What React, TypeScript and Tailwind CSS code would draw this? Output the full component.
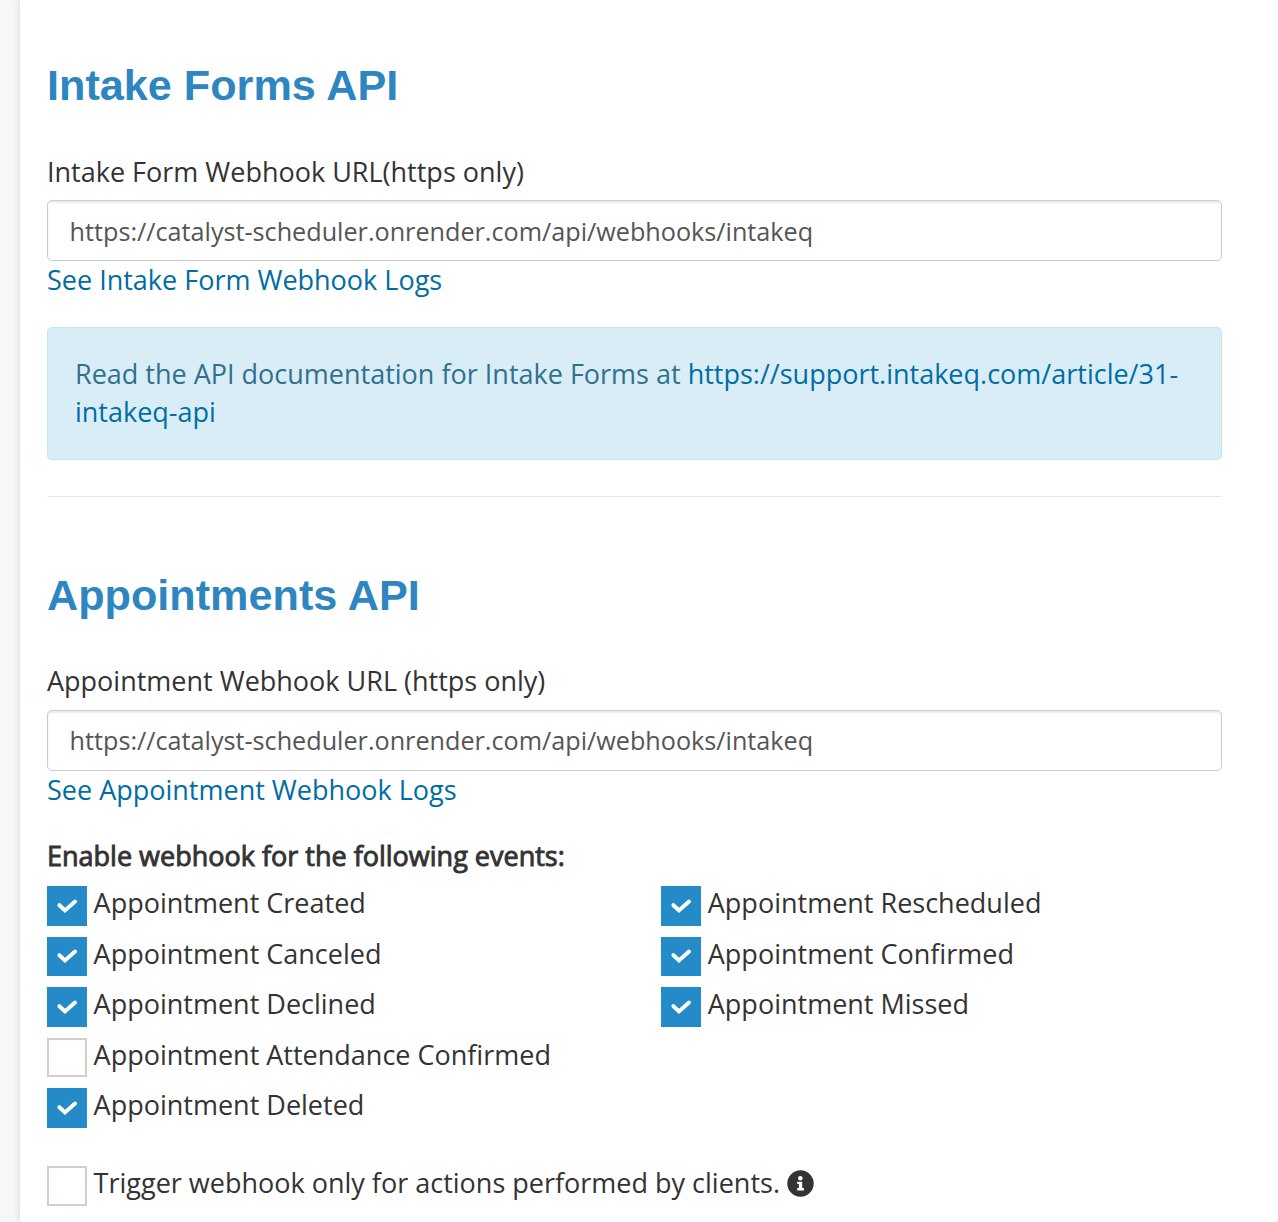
import type { ReactNode } from "react";

function Heading({ children }: { children: ReactNode }) {
  return (
    <h2 className="font-['Liberation_Sans',Arial,sans-serif] text-[43.2px] leading-[47.5px] font-bold text-[#2e86c1]">
      {children}
    </h2>
  );
}

function WebhookField({ id, label, link }: { id: string; label: string; link: string }) {
  return (
    <div>
      <label htmlFor={id} className="block">
        {label}
      </label>
      <input
        id={id}
        type="text"
        defaultValue="https://catalyst-scheduler.onrender.com/api/webhooks/intakeq"
        className="block h-[61px] w-full rounded-[5px] border border-[#ccc] bg-white px-[21.6px] text-[25.2px] text-[#555] shadow-[inset_0_2px_2px_rgba(0,0,0,0.075)] outline-none"
      />
      <a href="#" className="block text-[#006da3]">
        {link}
      </a>
    </div>
  );
}

function CheckItem({ label, checked, children }: { label: string; checked: boolean; children?: ReactNode }) {
  return (
    <div className="flex h-[50.5px] items-start" role="checkbox" aria-checked={checked} aria-label={label}>
      {checked ? (
        <span className="mt-[2px] flex h-[39.6px] w-[39.6px] shrink-0 items-center justify-center bg-[#258ac8]">
          <svg viewBox="0 0 22 18" className="h-[18px] w-[22px]" fill="none" stroke="#fff" strokeWidth="4">
            <path d="M3.4 8.2 L9 13.4 L19 4.6" strokeLinecap="round" strokeLinejoin="miter" />
          </svg>
        </span>
      ) : (
        <span className="mt-[2px] h-[39.6px] w-[39.6px] shrink-0 border-2 border-[#d3cfc8] bg-white" />
      )}
      <span className="ml-[7px] whitespace-nowrap">{label}</span>
      {children}
    </div>
  );
}

const LEFT: [string, boolean][] = [
  ["Appointment Created", true],
  ["Appointment Canceled", true],
  ["Appointment Declined", true],
  ["Appointment Attendance Confirmed", false],
  ["Appointment Deleted", true],
];
const RIGHT: [string, boolean][] = [
  ["Appointment Rescheduled", true],
  ["Appointment Confirmed", true],
  ["Appointment Missed", true],
];

export default function App() {
  return (
    <div className="flex h-[1222px] w-full overflow-hidden bg-[#f7f7f7] font-['Open_Sans',sans-serif] text-[27px] leading-[38.57px] text-[#333]">
      <main className="ml-5 flex-1 bg-white pt-[61.5px] pr-14 pl-[27px] shadow-[0_0_7px_rgba(0,0,0,0.15)]">
        <Heading>Intake Forms API</Heading>
        <div className="mt-[43.5px] [&>div>label]:mb-[9.2px]">
          <WebhookField id="forms" label="Intake Form Webhook URL(https only)" link="See Intake Form Webhook Logs" />
        </div>
        <div className="mt-[27.2px] h-[133px] rounded-[5px] border border-[#bce8f1] bg-[#d9edf7] px-[27px] pt-[27.4px] leading-[38px] text-[#31708f]">
          Read the API documentation for Intake Forms at{" "}
          <a href="#" className="text-[#006da3]">
            https://support.intakeq.com/article/31-intakeq-api
          </a>
        </div>
        <hr className="mt-9 border-t border-[#e7e7e7]" />
        <div className="mt-[74.7px]">
          <Heading>Appointments API</Heading>
        </div>
        <div className="mt-[42.5px] [&>div>label]:mb-[9.4px]">
          <WebhookField id="appts" label="Appointment Webhook URL (https only)" link="See Appointment Webhook Logs" />
        </div>
        <p className="mt-[27.3px] [-webkit-text-stroke:0.9px_#333]">Enable webhook for the following events:</p>
        <div className="mt-[9px] flex">
          <div className="w-[614.2px]">
            {LEFT.map(([label, on]) => (
              <CheckItem key={label} label={label} checked={on} />
            ))}
          </div>
          <div>
            {RIGHT.map(([label, on]) => (
              <CheckItem key={label} label={label} checked={on} />
            ))}
          </div>
        </div>
        <div className="mt-[27.5px]">
          <CheckItem label="Trigger webhook only for actions performed by clients." checked={false}>
            <svg viewBox="0 0 27 27" className="mt-[5.8px] ml-[7px] h-[27px] w-[27px]">
              <circle cx="13.5" cy="13.5" r="13.2" fill="#333" />
              <circle cx="13.3" cy="8.3" r="2.3" fill="#fff" />
              <path d="M10.2 11.7h5v6.4h1.7v2.3h-6.7v-2.3h1.7v-4.1h-1.7z" fill="#fff" />
            </svg>
          </CheckItem>
        </div>
      </main>
    </div>
  );
}
